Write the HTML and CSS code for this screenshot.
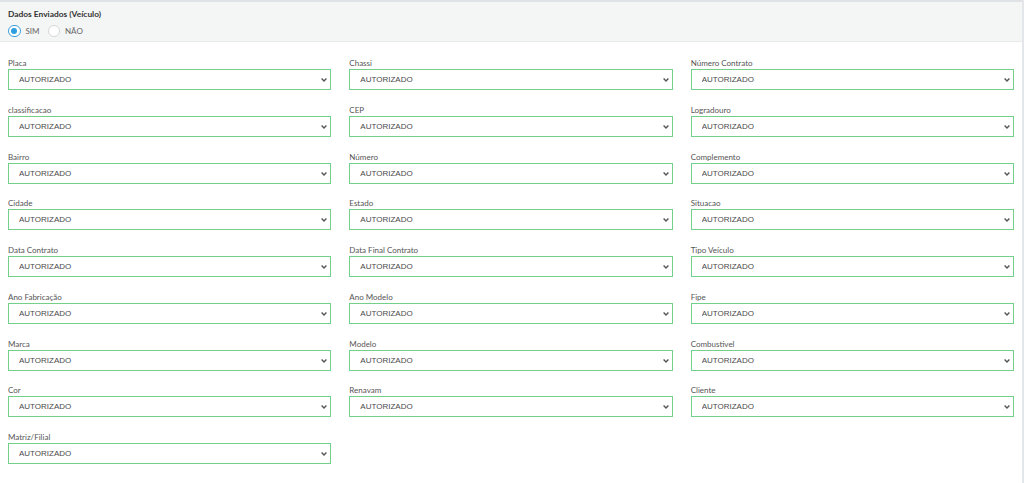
FILE: index.html
```html
<!DOCTYPE html>
<html lang="pt-BR">
<head>
    <meta charset="UTF-8">
    <meta name="viewport" content="width=device-width, initial-scale=1.0">
    <title>Dados Enviados (Veículo)</title>
    <link rel="stylesheet" href="styles.css">
</head>
<body>

    <div class="page">
        <div class="panel-header">
            <div class="panel-title">Dados Enviados (Veículo)</div>
            <div class="radio-group">
                <label class="radio"><input type="radio" name="enviados" checked> SIM</label>
                <label class="radio"><input type="radio" name="enviados"> NÃO</label>
            </div>
        </div>

        <div class="fields" id="fields"></div>
    </div>

    <script>
        const campos = [
            'Placa', 'Chassi', 'Número Contrato',
            'classificacao', 'CEP', 'Logradouro',
            'Bairro', 'Número', 'Complemento',
            'Cidade', 'Estado', 'Situacao',
            'Data Contrato', 'Data Final Contrato', 'Tipo Veículo',
            'Ano Fabricação', 'Ano Modelo', 'Fipe',
            'Marca', 'Modelo', 'Combustivel',
            'Cor', 'Renavam', 'Cliente',
            'Matriz/Filial'
        ];

        const container = document.getElementById('fields');

        campos.forEach(function (nome) {
            const field = document.createElement('div');
            field.className = 'field';
            field.innerHTML =
                '<label class="field-label">' + nome + '</label>' +
                '<div class="select-wrap">' +
                    '<select class="field-select">' +
                        '<option>AUTORIZADO</option>' +
                        '<option>NÃO AUTORIZADO</option>' +
                    '</select>' +
                    '<svg class="chevron" width="6" height="4" viewBox="0 0 6 4"><path d="M0.6 0.6 L3 3 L5.4 0.6" fill="none" stroke="#555" stroke-width="1.4"/></svg>' +
                '</div>';
            container.appendChild(field);
        });
    </script>

</body>
</html>
```

FILE: styles.css
```css
body {
    margin: 0;
    font-family: Lato, "Open Sans", sans-serif;
    background-color: #fff;
    color: #555;
}

.page {
    min-height: 100vh;
    border-right: 2px solid #e4e7e9;
    box-sizing: border-box;
}

.panel-header {
    background-color: #f4f5f5;
    border-top: 2px solid #dfe3e6;
    border-bottom: 1px solid #e7e9ea;
    padding: 6px 8px 4px;
}

.panel-title {
    font-size: 8.4px;
    font-weight: bold;
    line-height: 12px;
    color: #333;
}

.radio-group {
    display: flex;
    align-items: center;
    gap: 8px;
    margin-top: 5px;
    height: 12px;
}

.radio {
    display: flex;
    align-items: center;
    gap: 5px;
    font-size: 8px;
    color: #666;
}

.radio input {
    appearance: none;
    -webkit-appearance: none;
    margin: 0;
    width: 12.5px;
    height: 12.5px;
    border-radius: 50%;
    border: 1px solid #d5d8da;
    background-color: #fff;
    position: relative;
}

.radio input:checked {
    border-color: #3aa0dc;
}

.radio input:checked::after {
    content: '';
    position: absolute;
    top: 2.25px;
    left: 2.25px;
    width: 6px;
    height: 6px;
    border-radius: 50%;
    background-color: #2d9ee0;
}

.fields {
    display: grid;
    grid-template-columns: repeat(3, 1fr);
    column-gap: 18px;
    row-gap: 14.75px;
    padding: 16px 8px 0 8px;
}

.field-label {
    display: block;
    font-size: 8px;
    line-height: 10px;
    margin-bottom: 1px;
    color: #555;
}

.select-wrap {
    position: relative;
}

.field-select {
    appearance: none;
    -webkit-appearance: none;
    display: block;
    width: 100%;
    height: 21px;
    margin: 0;
    padding: 0 0 0 10px;
    border: 1px solid #73d08a;
    border-radius: 0;
    background-color: #fff;
    font-family: "Liberation Sans", Arial, sans-serif;
    font-size: 8px;
    color: #4a4a4a;
    outline: none;
}

.chevron {
    position: absolute;
    right: 4px;
    top: 9px;
    pointer-events: none;
}
```
